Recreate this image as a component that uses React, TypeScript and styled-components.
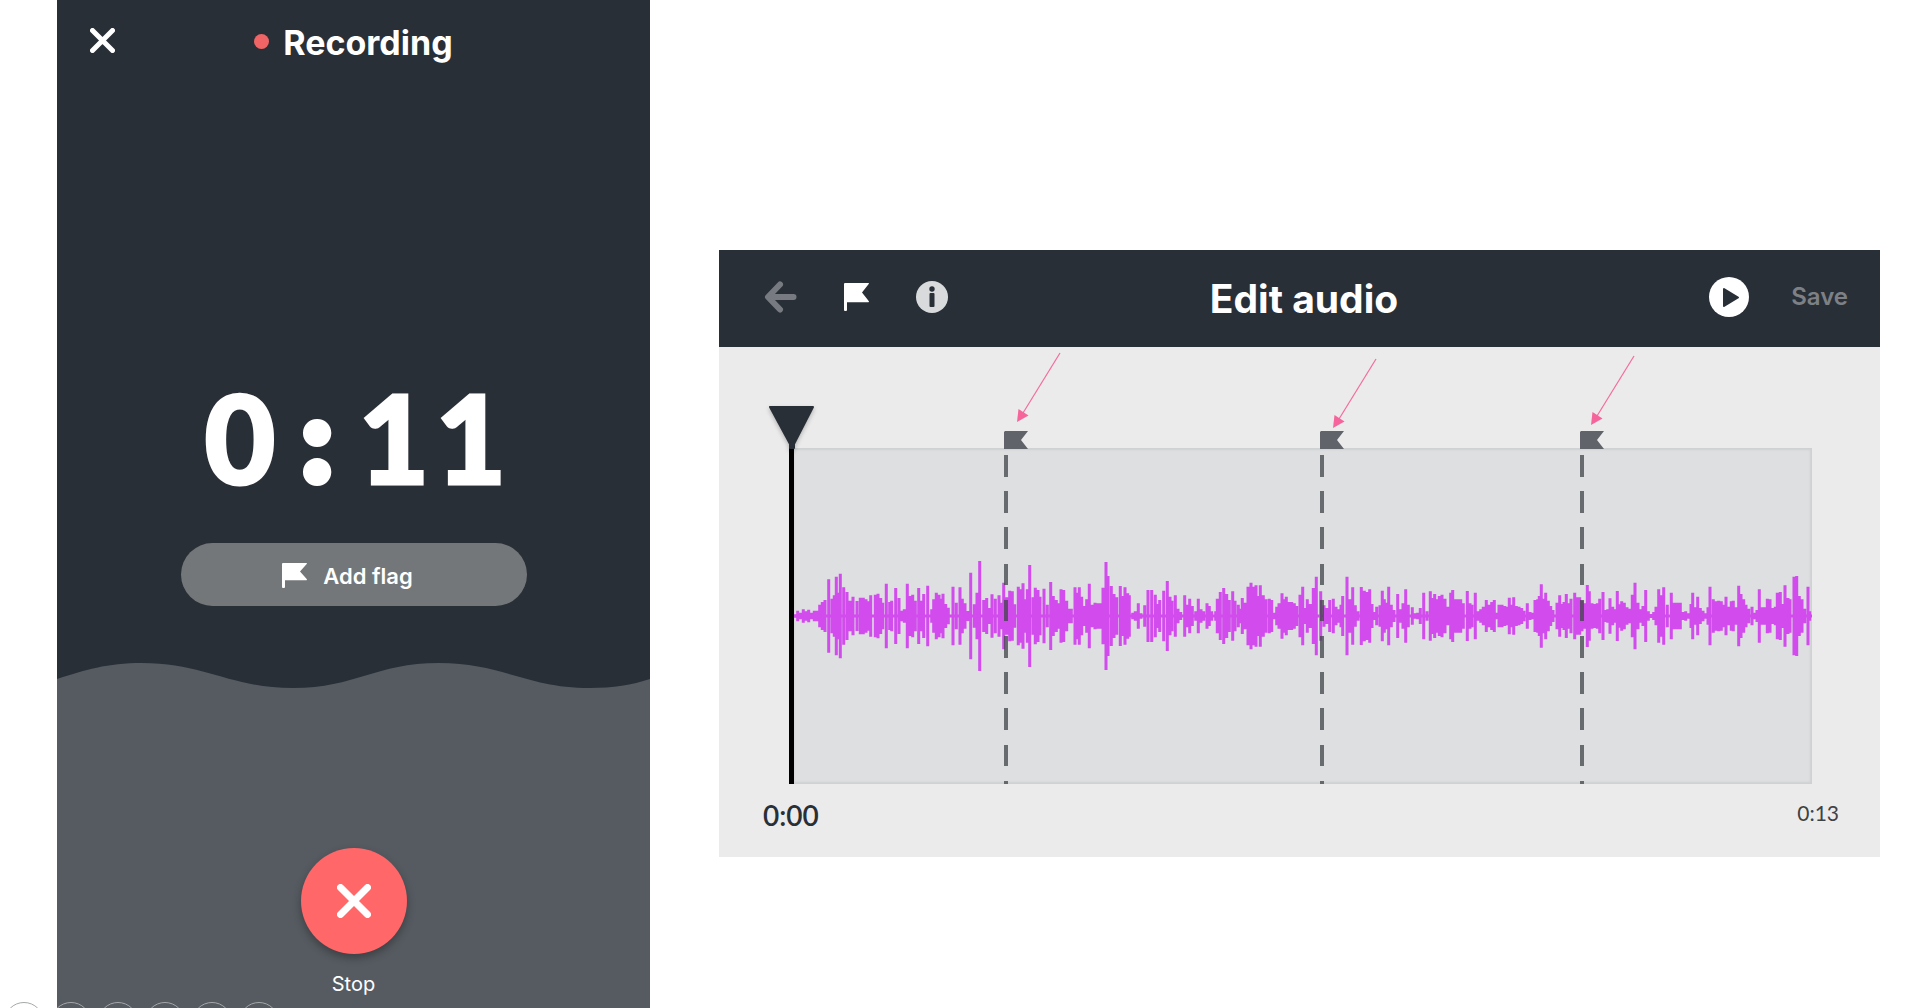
import React from "react";
import styled, { createGlobalStyle } from "styled-components";

const ink = "#292f37";
const slate = "#565b61";

const GlobalStyle = createGlobalStyle`
  *, *::before, *::after { box-sizing: border-box; }
  body { margin: 0; background: #fff; font-family: Lato, "Open Sans", sans-serif; }
  button { border: 0; padding: 0; background: none; font: inherit; color: inherit; cursor: pointer; }
  h1, h2, p { margin: 0; }
  svg { display: block; }
`;

const Page = styled.main`
  position: relative;
  overflow: hidden;
  min-height: 100vh;
  display: grid;
  grid-template-columns: minmax(0, 593fr) minmax(0, 1161fr);
  column-gap: 69px;
  padding: 0 33px 0 57px;
`;

/* Recorder */

const Recorder = styled.section`
  display: flex;
  flex-direction: column;
  background: ${ink};
  color: #fff;
`;

const RecorderHeader = styled.header`
  display: grid;
  grid-template-columns: 1fr auto 1fr;
  align-items: start;
  height: 84px;
  padding: 19px 25px 0;
`;

const IconButton = styled.button<{ $tone?: string }>`
  display: flex;
  align-items: center;
  justify-content: center;
  width: 40px;
  height: 42px;
  color: ${(p) => p.$tone || "#fff"};
`;

const RecorderTitle = styled.h1`
  display: flex;
  align-items: center;
  gap: 14px;
  font: 700 34px/48px Inter, sans-serif;
`;

const RecordDot = styled.span`
  width: 15px;
  height: 15px;
  margin-bottom: 4px;
  border-radius: 50%;
  background: #f06466;
`;

const Timer = styled.div`
  display: grid;
  grid-template-columns: repeat(4, 77px);
  justify-content: center;
  height: 120px;
  margin-top: 293px;
  padding-left: 4px;
  font-size: 122px;
  font-weight: 900;
  line-height: 120px;
  text-align: center;
  -webkit-text-stroke: 3px #fff;
`;

const Colon = styled.span`
  font-size: 112px;
  -webkit-text-stroke-width: 10px;
`;

const FlagButton = styled.button`
  align-self: center;
  display: flex;
  align-items: center;
  justify-content: center;
  gap: 16px;
  width: 346px;
  max-width: 90%;
  height: 63px;
  margin-top: 46px;
  padding: 2px 12px 0 0;
  border-radius: 32px;
  background: #74777a;
  font: 600 22px/32px Inter, sans-serif;
`;

const Wave = styled.svg`
  width: 100%;
  height: 26px;
  margin-top: 57px;
`;

const StopArea = styled.div`
  flex: 1;
  display: flex;
  flex-direction: column;
  align-items: center;
  gap: 17px;
  padding: 159px 0 11px;
  background: ${slate};
`;

const StopButton = styled.button`
  display: flex;
  align-items: center;
  justify-content: center;
  width: 106px;
  height: 106px;
  border-radius: 50%;
  background: #ff6769;
  box-shadow: 0 4px 8px rgba(0, 0, 0, 0.3);
`;

const StopLabel = styled.label`
  font: 400 20px/26px Inter, sans-serif;
`;

/* Editor */

const Editor = styled.section`
  align-self: start;
  margin-top: 250px;
  background: #ebebeb;
  color: ${ink};
`;

const EditorHeader = styled.header`
  display: grid;
  grid-template-columns: 1fr auto 1fr;
  align-items: center;
  height: 97px;
  padding: 0 32px 0 41px;
  background: ${ink};
  color: #fff;
`;

const Tools = styled.div<{ $end?: boolean }>`
  display: flex;
  align-items: center;
  justify-content: ${(p) => (p.$end ? "flex-end" : "flex-start")};
  gap: ${(p) => (p.$end ? 42 : 36)}px;
  padding-bottom: 4px;
`;

const EditorTitle = styled.h2`
  font: 700 39px/48px Inter, sans-serif;
`;

const SaveButton = styled.button`
  color: #7d8186;
  font: 600 24px/32px Inter, sans-serif;
`;

const Track = styled.div`
  position: relative;
  height: 336px;
  margin: 101px 68px 0 70px;
  border-left: 5px solid #000;
  background: #dddfe1;
  box-shadow: inset -2px 0 2px #cfd1d2, inset 0 2px 2px #cfd1d2, inset 0 -2px 2px #cfd1d2;
`;

const Playhead = styled.svg`
  position: absolute;
  top: -43px;
  left: -26px;
  overflow: visible;
  filter: drop-shadow(0 2px 2px rgba(0, 0, 0, 0.25));
`;

const Waveform = styled.svg`
  position: absolute;
  top: 108px;
  left: 0;
  width: 100%;
  height: 120px;
`;

const Marker = styled.div`
  position: absolute;
  top: -17px;
  bottom: 0;
  width: 24px;
`;

const MarkerLine = styled.div`
  position: absolute;
  top: 24px;
  bottom: 0;
  width: 4px;
  background: repeating-linear-gradient(
    rgba(64, 68, 72, 0.75) 0 6.6%,
    transparent 6.6% 11%
  );
`;

const Pointer = styled.svg`
  position: absolute;
  overflow: visible;
`;

const Times = styled.div`
  display: flex;
  justify-content: space-between;
  align-items: flex-start;
  padding: 15px 41px 26px 44px;
`;

const Current = styled.time`
  font-size: 28px;
  font-weight: 600;
  line-height: 32px;
`;

const Total = styled.time`
  color: #3d4247;
  font-size: 21px;
  line-height: 28px;
`;

/* Presentation controls peeking over the bottom edge */

const Slides = styled.nav`
  position: absolute;
  bottom: -34px;
  left: 4px;
  display: flex;
  gap: 7px;
`;

const SlideButton = styled.button`
  width: 40px;
  height: 40px;
  border: 1px solid #a5a7a9;
  border-radius: 50%;
`;

const Cross = ({ size, weight }: { size: number; weight: number }) => (
  <svg width={size} height={size} viewBox={`0 0 ${size} ${size}`} stroke="currentColor" strokeWidth={weight} strokeLinecap="round">
    <path d={`M${weight / 2} ${weight / 2}L${size - weight / 2} ${size - weight / 2}M${size - weight / 2} ${weight / 2}L${weight / 2} ${size - weight / 2}`} />
  </svg>
);

const Flag = ({ width = 25, height = 28 }) => (
  <svg width={width} height={height} viewBox="0 0 25 28" preserveAspectRatio="none" fill="currentColor">
    <path d="M1 0H24.5Q25.3 .3 24.7 1L18 9.5L24.7 18Q25.3 19 24.4 19.3H3V27Q3 28 2 28H1Q0 28 0 27V1Q0 0 1 0Z" />
  </svg>
);

/* Samples as x, height pairs at three units per pixel, one list per chunk of the recording */
const chunks: { start: number; samples: string }[] = [
  {
    start: -14,
    samples:
      "45:5 53:16 62:10 70:20 77:14 86:19 95:10 103:16 111:16 119:34 127:42 135:48 146:110 156:52 163:62 169:118 175:70 181:127 191:86 201:72 210:46 219:58 231:45 241:55 250:55 258:50 265:44 272:62 286:64 294:67 302:54 308:40 319:97 329:42 335:46 347:84 357:54 365:16 373:20 382:97 390:60 398:64 406:46 416:84 424:46 431:66 443:91 455:20 461:50 469:70 477:64 484:52 489:67 497:36 505:25 519:88 529:40 540:86 547:52 555:38 563:15 572:130 583:35 591:70 599:165 611:48 620:54 628:24 636:65 646:52 657:62 664:40 671:100 680:56 689:76 697:74 704:35 715:88 723:80 729:98 736:50 742:80 749:153 759:56 766:85 774:78 780:58 792:82 802:34 812:102 820:60 829:48 836:38 843:80 851:78 860:46 867:22 874:22 885:86 891:70 898:86 905:58 912:30 920:50 928:97 937:34 945:40 953:38 961:38 969:85 978:162 984:120 994:90 1002:66 1010:56",
  },
  {
    start: 326,
    samples:
      "1:90 8:60 15:86 23:68 28:62 38:10 46:14 55:38 63:8 74:32 84:78 95:78 106:64 112:36 119:48 131:76 142:105 150:58 156:46 166:62 174:22 182:12 194:62 201:34 209:52 217:30 227:14 235:52 243:20 251:14 261:38 268:30 275:14 287:14 292:52 301:72 311:84 320:66 328:48 338:74 345:46 355:34 361:22 367:54 376:40 384:88 393:100 400:88 408:92 414:60 421:92 430:62 438:50 448:52 455:48 463:10 470:28 477:38 486:68 492:50 499:58 507:42 515:42 523:38 530:30 540:64 548:88 556:24 562:50 571:36 580:84 589:118 602:74 612:32 620:24 629:48 640:52 648:28 655:20 663:34 668:60 681:118 689:50 698:86 706:32 714:14 724:87 733:76 740:72 749:80 756:36 763:12 770:28 780:32 787:76 793:50 800:40 806:88 814:34 822:18 833:66 841:20 849:38 857:80 865:34 877:26 885:8 893:10 901:24 911:70 921:14 931:74 937:54 944:66 952:50 958:60 966:64 975:52 983:28 992:70 998:78 1006:50 1015:50",
  },
  {
    start: 666,
    samples:
      "2:50 10:38 22:75 30:38 36:34 46:70 54:14 62:20 70:28 79:48 87:34 95:42 103:48 111:10 117:34 126:34 134:30 141:28 148:55 155:34 161:56 169:30 177:28 185:24 192:16 202:38 210:12 217:10 225:48 233:50 238:60 244:95 251:52 257:70 265:46 272:30 279:18 291:40 299:62 306:36 312:42 319:66 327:38 333:52 344:70 352:56 359:56 366:46 373:38 382:93 388:74 396:38 404:36 412:38 419:52 429:72 437:18 443:20 450:53 458:28 465:20 472:75 479:35 485:44 493:40 501:26 508:22 517:64 525:100 534:40 542:20 549:30 557:78 565:14 573:6 581:12 588:28 596:80 603:62 611:86 622:34 634:70 643:40 652:40 661:40 668:12 677:14 685:8 693:36 698:70 706:26 713:58 721:24 729:16 737:8 744:26 750:88 760:50 768:44 776:46 784:44 791:34 798:58 806:28 814:44 820:46 828:26 836:91 843:66 851:50 858:34 866:22 876:28 884:10 891:18 898:80 907:26 915:26 922:52 930:50 938:24 946:28 952:70 961:72 967:36 975:92 984:54 990:50 1002:118 1010:120 1018:60 1026:50 1034:22 1044:88 1049:14",
  },
];

const waveformPath = chunks
  .flatMap(({ start, samples }) =>
    samples.split(" ").map((pair) => {
      const [x, h] = pair.split(":").map(Number);
      const px = (start + x / 3).toFixed(1);
      return `M${px} ${(60 - h / 3).toFixed(1)}V${(60 + h / 3).toFixed(1)}`;
    })
  )
  .join("");

const markers = [
  { at: "20.6%", x: 13, y: -9 },
  { at: "51.7%", x: 13, y: -3 },
  { at: "77.2%", x: 11, y: -6 },
];

export default function App() {
  return (
    <>
      <GlobalStyle />
      <Page>
        <Recorder>
          <RecorderHeader>
            <IconButton type="button" aria-label="Close">
              <Cross size={25} weight={5} />
            </IconButton>
            <RecorderTitle>
              <RecordDot />
              Recording
            </RecorderTitle>
          </RecorderHeader>
          <Timer role="timer">
            <span>0</span>
            <Colon>:</Colon>
            <span>1</span>
            <span>1</span>
          </Timer>
          <FlagButton type="button">
            <Flag height={25} />
            Add flag
          </FlagButton>
          <Wave viewBox="0 0 593 26" preserveAspectRatio="none" aria-hidden="true">
            <path
              fill={slate}
              d="M0 16C28 7 50 0 85 0C148 0 173 25 236 25C299 25 318 0 382 0C445 0 470 25 533 25C556 25 575 22 593 16V27H0Z"
            />
          </Wave>
          <StopArea>
            <StopButton type="button" id="stop">
              <Cross size={34} weight={7} />
            </StopButton>
            <StopLabel htmlFor="stop">Stop</StopLabel>
          </StopArea>
        </Recorder>

        <Editor>
          <EditorHeader>
            <Tools>
              <IconButton type="button" aria-label="Back" $tone="#777b81">
                <svg width="33" height="32" viewBox="0 0 33 32" fill="none" stroke="currentColor" strokeWidth="6" strokeLinecap="round" strokeLinejoin="round">
                  <path d="M16 3.5L4 16L16 28.5M5 16H29.5" />
                </svg>
              </IconButton>
              <IconButton type="button" aria-label="Flag">
                <Flag />
              </IconButton>
              <IconButton type="button" aria-label="Info" $tone="#d8dadc">
                <svg width="32" height="32" viewBox="0 0 32 32">
                  <circle cx="16" cy="16" r="16" fill="currentColor" />
                  <circle cx="16" cy="8" r="2.7" fill={ink} />
                  <rect x="13.5" y="12" width="5" height="14" rx="1" fill={ink} />
                </svg>
              </IconButton>
            </Tools>
            <EditorTitle>Edit audio</EditorTitle>
            <Tools $end>
              <IconButton type="button" aria-label="Play">
                <svg width="40" height="40" viewBox="0 0 40 40">
                  <circle cx="20" cy="20" r="20" fill="currentColor" />
                  <path d="M15 12L29 20.5L15 29Z" fill={ink} stroke={ink} strokeWidth="2" strokeLinejoin="round" />
                </svg>
              </IconButton>
              <SaveButton type="button">Save</SaveButton>
            </Tools>
          </EditorHeader>

          <Track>
            <Waveform viewBox="0 0 1018 120" preserveAspectRatio="none" aria-hidden="true">
              <path d={`M0 60H1018${waveformPath}`} stroke="#d14bed" strokeWidth="3" fill="none" />
            </Waveform>
            {markers.map((m) => (
              <Marker key={m.at} style={{ left: m.at }}>
                <svg width="24" height="18" viewBox="0 0 24 18" fill="#60636a">
                  <path d="M1 0H24L17 9L24 18H0V1Z" />
                </svg>
                <MarkerLine />
                <Pointer width="44" height="69" viewBox="0 0 44 69" style={{ left: m.x, top: m.y - 69 }} aria-hidden="true">
                  <path d="M43 0L6 60" stroke="#f56a9e" strokeWidth="1.2" />
                  <path d="M0 69L1.5 56L11.5 62.5Z" fill="#f5659b" />
                </Pointer>
              </Marker>
            ))}
            <Playhead width="47" height="44" viewBox="0 0 47 44" aria-hidden="true">
              <path d="M2 2H45L26 39V43H22V39Z" fill={ink} stroke={ink} strokeWidth="2" strokeLinejoin="round" />
            </Playhead>
          </Track>
          <Times>
            <Current>0:00</Current>
            <Total>0:13</Total>
          </Times>
        </Editor>

        <Slides aria-label="Slides">
          {["Previous", "Next", "Pen", "Overview", "Zoom", "More"].map((name) => (
            <SlideButton key={name} type="button" aria-label={name} />
          ))}
        </Slides>
      </Page>
    </>
  );
}
